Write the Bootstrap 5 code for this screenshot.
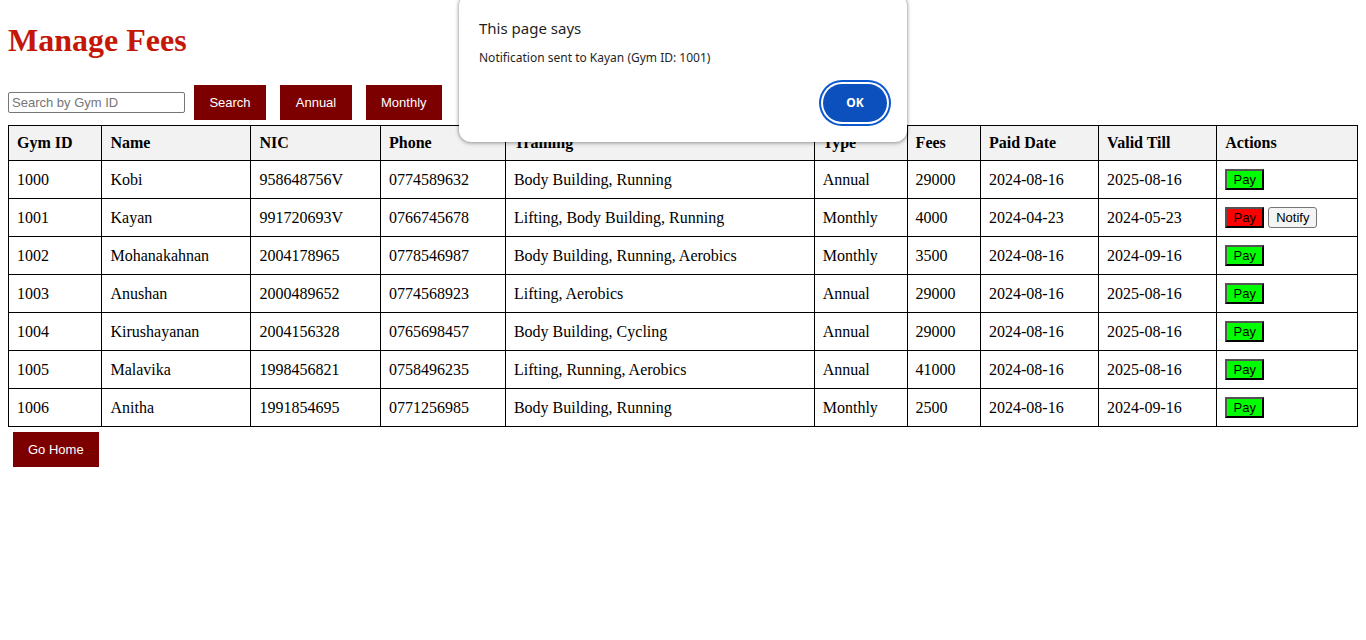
<!DOCTYPE html>
<html lang="en">
<head>
<meta charset="utf-8">
<meta name="viewport" content="width=device-width, initial-scale=1">
<title>Manage Fees</title>
<link href="https://cdn.jsdelivr.net/npm/bootstrap@5.3.0/dist/css/bootstrap.min.css" rel="stylesheet">
<style>
  body { font-family: "Liberation Serif", "Times New Roman", serif; font-size: 16px; line-height: 18px; color: #000; }
  .page-title { font-size: 32px; line-height: 36px; font-weight: 700; color: #c41708; padding-top: 14px; margin-bottom: 27px; }
  .toolbar { gap: 14px; margin-bottom: 5px; }
  .search-group { gap: 9px; }
  .search-box, .action-btn, .pay-btn, .notify-btn { font-family: "Liberation Sans", Arial, sans-serif; font-size: 13px; }
  .search-box { width: 177px; height: 21px; line-height: 15px; padding: 1px 3px; border: 1px solid #767676; border-radius: 2px; min-height: 0; }
  .search-box::placeholder { color: #757575; }
  .action-btn, .action-btn:hover { min-width: 72px; background: #7d0000; color: #fff; border: 0; border-radius: 0; padding: 10px 15px; line-height: 15px; }
  .fees-table { --bs-table-color: #000; border-collapse: collapse; color: #000; line-height: 18px; border-color: #000; }
  .fees-table > :not(caption) > * > * { padding: 8px; border: 1px solid #000; color: #000; }
  .fees-table > thead > tr > th { background: #f2f2f2; }
  .pay-btn, .notify-btn { line-height: 15px; padding: 1px 6px; color: #000; }
  .pay-btn { min-width: 39px; border: 2px outset #000; border-radius: 0; background: #0f0; }
  .pay-btn:hover { background: #0f0; border-color: #000; color: #000; }
  .pay-btn.overdue { background: #f00; }
  .notify-btn { padding: 2px 7px; border: 1px solid #767676; border-radius: 3px; background: #f4f4f4; }
  .home-row { padding: 5px; }
  .alert-dialog { top: -6px; width: 448px; max-width: 100%; padding: 23px 20px 20px; background: #fff; border-radius: 12px; box-shadow: 0 0 3px 1px rgba(0,0,0,.25), 0 2px 5px rgba(0,0,0,.15); font-family: "Segoe UI", "Noto Sans", sans-serif; color: #1f1f1f; z-index: 10; }
  .alert-dialog h2 { font-size: 15px; line-height: 22px; font-weight: 400; margin-bottom: 10px; }
  .alert-dialog p { font-size: 12px; line-height: 18px; margin-bottom: 17px; }
  .ok-btn, .ok-btn:hover { width: 64px; height: 38px; padding: 0; border: 0; border-radius: 19px; background: #0b50bd; color: #fff; font-size: 12px; font-weight: 700; box-shadow: 0 0 0 2px #fff, 0 0 0 4px #0b57d0; }
</style>
</head>
<body>
<main class="p-2">
  <h1 class="page-title">Manage Fees</h1>
  <div class="toolbar d-flex flex-wrap align-items-center">
    <form class="search-group d-flex align-items-center">
      <input type="text" class="form-control search-box" placeholder="Search by Gym ID" aria-label="Search by Gym ID">
      <button type="button" class="btn action-btn">Search</button>
    </form>
    <button type="button" class="btn action-btn">Annual</button>
    <button type="button" class="btn action-btn">Monthly</button>
  </div>
  <table class="table fees-table align-middle mb-0">
    <thead>
      <tr><th>Gym ID</th><th>Name</th><th>NIC</th><th>Phone</th><th>Training</th><th>Type</th><th>Fees</th><th>Paid Date</th><th>Valid Till</th><th>Actions</th></tr>
    </thead>
    <tbody>
      <tr><td>1000</td><td>Kobi</td><td>958648756V</td><td>0774589632</td><td>Body Building, Running</td><td>Annual</td><td>29000</td><td>2024-08-16</td><td>2025-08-16</td><td><div class="d-flex gap-1"><button type="button" class="btn pay-btn">Pay</button></div></td></tr>
      <tr><td>1001</td><td>Kayan</td><td>991720693V</td><td>0766745678</td><td>Lifting, Body Building, Running</td><td>Monthly</td><td>4000</td><td>2024-04-23</td><td>2024-05-23</td><td><div class="d-flex gap-1"><button type="button" class="btn pay-btn overdue">Pay</button><button type="button" class="btn notify-btn">Notify</button></div></td></tr>
      <tr><td>1002</td><td>Mohanakahnan</td><td>2004178965</td><td>0778546987</td><td>Body Building, Running, Aerobics</td><td>Monthly</td><td>3500</td><td>2024-08-16</td><td>2024-09-16</td><td><div class="d-flex gap-1"><button type="button" class="btn pay-btn">Pay</button></div></td></tr>
      <tr><td>1003</td><td>Anushan</td><td>2000489652</td><td>0774568923</td><td>Lifting, Aerobics</td><td>Annual</td><td>29000</td><td>2024-08-16</td><td>2025-08-16</td><td><div class="d-flex gap-1"><button type="button" class="btn pay-btn">Pay</button></div></td></tr>
      <tr><td>1004</td><td>Kirushayanan</td><td>2004156328</td><td>0765698457</td><td>Body Building, Cycling</td><td>Annual</td><td>29000</td><td>2024-08-16</td><td>2025-08-16</td><td><div class="d-flex gap-1"><button type="button" class="btn pay-btn">Pay</button></div></td></tr>
      <tr><td>1005</td><td>Malavika</td><td>1998456821</td><td>0758496235</td><td>Lifting, Running, Aerobics</td><td>Annual</td><td>41000</td><td>2024-08-16</td><td>2025-08-16</td><td><div class="d-flex gap-1"><button type="button" class="btn pay-btn">Pay</button></div></td></tr>
      <tr><td>1006</td><td>Anitha</td><td>1991854695</td><td>0771256985</td><td>Body Building, Running</td><td>Monthly</td><td>2500</td><td>2024-08-16</td><td>2024-09-16</td><td><div class="d-flex gap-1"><button type="button" class="btn pay-btn">Pay</button></div></td></tr>
    </tbody>
  </table>
  <div class="home-row"><button type="button" class="btn action-btn">Go Home</button></div>
</main>
<div class="alert-dialog position-absolute start-50 translate-middle-x" role="alertdialog" aria-labelledby="alert-title" aria-describedby="alert-text">
  <h2 id="alert-title">This page says</h2>
  <p id="alert-text">Notification sent to Kayan (Gym ID: 1001)</p>
  <div class="d-flex justify-content-end"><button type="button" class="btn ok-btn">OK</button></div>
</div>
<script src="https://cdn.jsdelivr.net/npm/bootstrap@5.3.0/dist/js/bootstrap.bundle.min.js"></script>
</body>
</html>
